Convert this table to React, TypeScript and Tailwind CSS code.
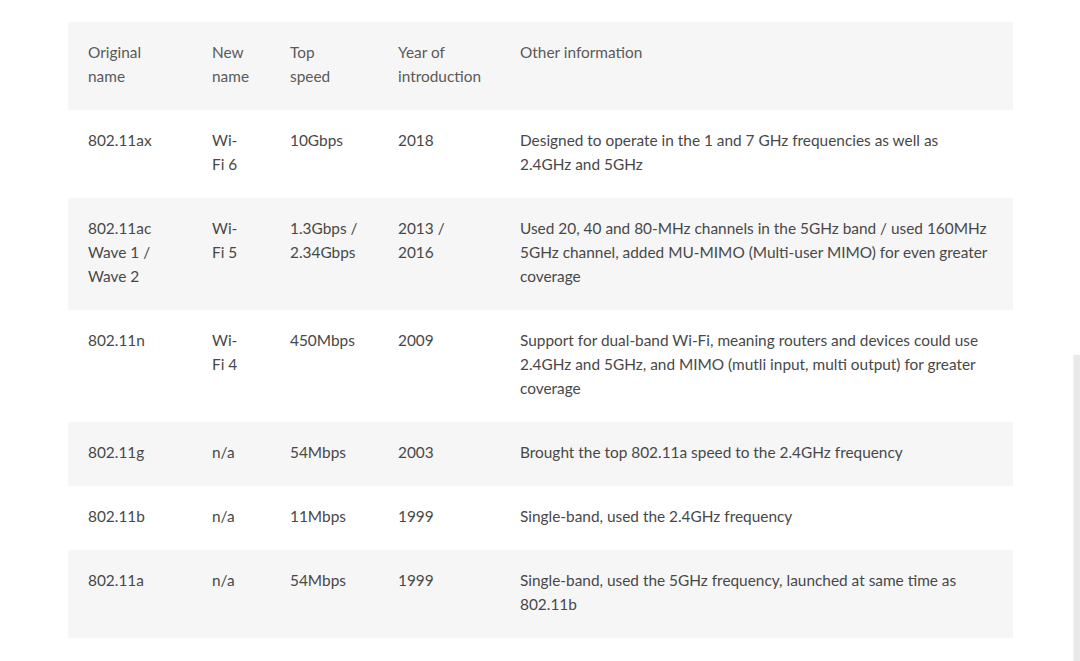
import React from "react";

const rows: string[][][] = [
  [["802.11ax"], ["Wi-", "Fi 6"], ["10Gbps"], ["2018"], ["Designed to operate in the 1 and 7 GHz frequencies as well as", "2.4GHz and 5GHz"]],
  [["802.11ac", "Wave 1 /", "Wave 2"], ["Wi-", "Fi 5"], ["1.3Gbps /", "2.34Gbps"], ["2013 /", "2016"], ["Used 20, 40 and 80-MHz channels in the 5GHz band / used 160MHz", "5GHz channel, added MU-MIMO (Multi-user MIMO) for even greater", "coverage"]],
  [["802.11n"], ["Wi-", "Fi 4"], ["450Mbps"], ["2009"], ["Support for dual-band Wi-Fi, meaning routers and devices could use", "2.4GHz and 5GHz, and MIMO (mutli input, multi output) for greater", "coverage"]],
  [["802.11g"], ["n/a"], ["54Mbps"], ["2003"], ["Brought the top 802.11a speed to the 2.4GHz frequency"]],
  [["802.11b"], ["n/a"], ["11Mbps"], ["1999"], ["Single-band, used the 2.4GHz frequency"]],
  [["802.11a"], ["n/a"], ["54Mbps"], ["1999"], ["Single-band, used the 5GHz frequency, launched at same time as", "802.11b"]],
];

const header: string[][] = [["Original", "name"], ["New", "name"], ["Top", "speed"], ["Year of", "introduction"], ["Other information"]];

const widths = ["w-[124px]", "w-[78px]", "w-[108px]", "w-[122px]", "w-[513px]"];

function Cell({ lines, w, head }: { lines: string[]; w: string; head?: boolean }) {
  return (
    <td className={`${w} px-5 pt-[18px] pb-[22px] align-top whitespace-nowrap ${head ? "text-[#5a5a5a]" : "text-[#484848]"}`}>
      {lines.map((l, i) => (
        <div key={i}>{l}</div>
      ))}
    </td>
  );
}

export default function App() {
  return (
    <div className="relative w-[1080px] h-[661px] bg-white overflow-hidden" style={{ fontFamily: "Lato, 'Open Sans', sans-serif" }}>
      <div className="pt-[22px] pl-[68px]">
        <table className="table-fixed border-collapse w-[945px] text-[15.4px] leading-6">
          <tbody>
            <tr className="bg-[#f6f6f6]">
              {header.map((c, i) => (
                <Cell key={i} lines={c} w={widths[i]} head />
              ))}
            </tr>
            {rows.map((r, ri) => (
              <tr key={ri} className={ri % 2 === 1 ? "bg-[#f6f6f6]" : "bg-white"}>
                {r.map((c, i) => (
                  <Cell key={i} lines={c} w={widths[i]} />
                ))}
              </tr>
            ))}
          </tbody>
        </table>
      </div>
      <div className="absolute left-[1073px] top-[355px] w-[7px] h-[306px] bg-[#e9e9e9] border-l border-[#f2f2f2]" />
    </div>
  );
}
